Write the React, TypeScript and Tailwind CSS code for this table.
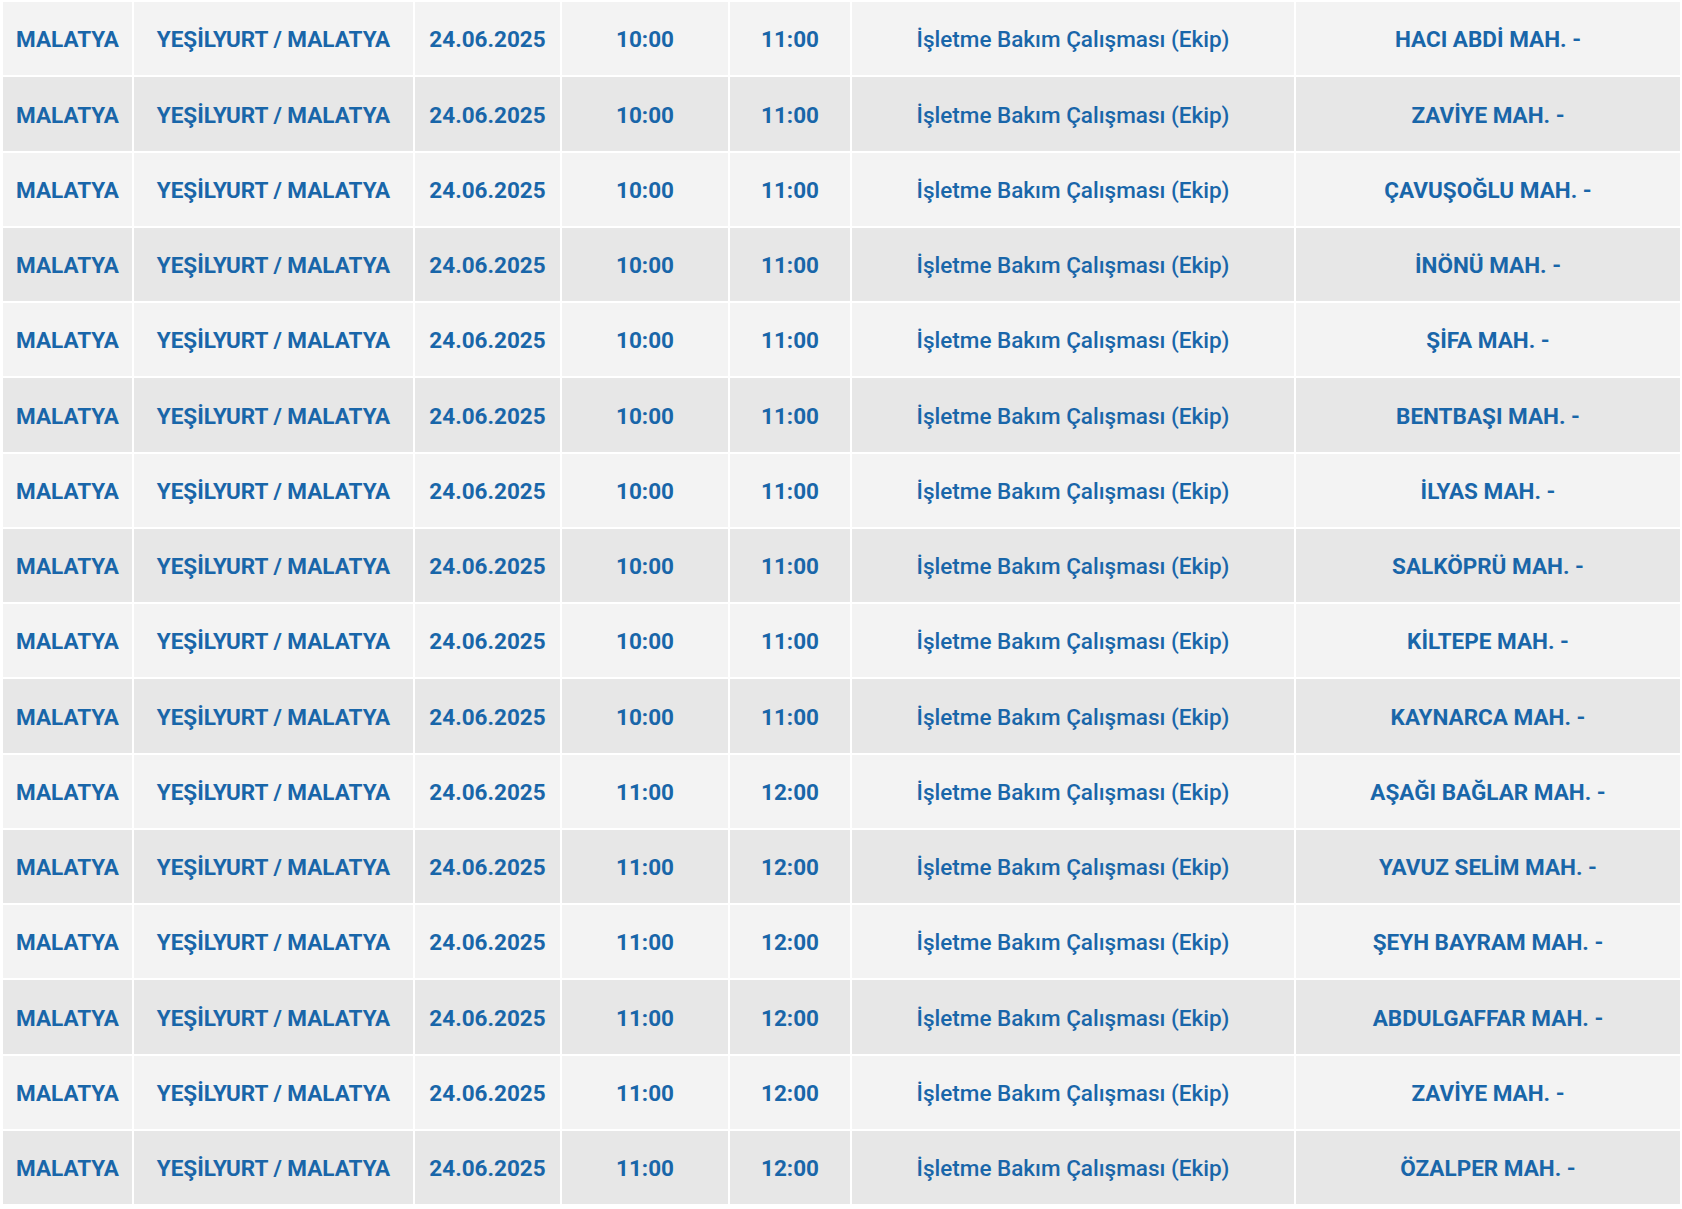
const rows: [string, string, string][] = [
  ["10:00", "11:00", "HACI ABDİ MAH. -"],
  ["10:00", "11:00", "ZAVİYE MAH. -"],
  ["10:00", "11:00", "ÇAVUŞOĞLU MAH. -"],
  ["10:00", "11:00", "İNÖNÜ MAH. -"],
  ["10:00", "11:00", "ŞİFA MAH. -"],
  ["10:00", "11:00", "BENTBAŞI MAH. -"],
  ["10:00", "11:00", "İLYAS MAH. -"],
  ["10:00", "11:00", "SALKÖPRÜ MAH. -"],
  ["10:00", "11:00", "KİLTEPE MAH. -"],
  ["10:00", "11:00", "KAYNARCA MAH. -"],
  ["11:00", "12:00", "AŞAĞI BAĞLAR MAH. -"],
  ["11:00", "12:00", "YAVUZ SELİM MAH. -"],
  ["11:00", "12:00", "ŞEYH BAYRAM MAH. -"],
  ["11:00", "12:00", "ABDULGAFFAR MAH. -"],
  ["11:00", "12:00", "ZAVİYE MAH. -"],
  ["11:00", "12:00", "ÖZALPER MAH. -"],
];

export default function App() {
  return (
    <div
      className="min-h-screen bg-white pt-[2px] pl-[3px] text-[22.5px] text-[#1966a9]"
      style={{ fontFamily: "Roboto, 'Liberation Sans', sans-serif" }}
    >
      <div className="grid w-[1677px] grid-cols-[129px_279px_145px_166px_120px_442px_384px] gap-x-[2px] gap-y-[2px]">
        {rows.map(([start, end, place], i) => {
          const bg = i % 2 === 0 ? "bg-[#f3f3f3]" : "bg-[#e7e7e7]";
          const cell = `flex h-[73.25px] items-center justify-center whitespace-nowrap pt-[3px] font-bold ${bg}`;
          return [
            <div key={`${i}-a`} className={cell}>MALATYA</div>,
            <div key={`${i}-b`} className={cell}>YEŞİLYURT / MALATYA</div>,
            <div key={`${i}-c`} className={cell}>24.06.2025</div>,
            <div key={`${i}-d`} className={cell}>{start}</div>,
            <div key={`${i}-e`} className={cell}>{end}</div>,
            <div key={`${i}-f`} className={`flex h-[73.25px] items-center justify-center whitespace-nowrap pt-[3px] font-medium ${bg}`}>
              İşletme Bakım Çalışması (Ekip)
            </div>,
            <div key={`${i}-g`} className={cell}>{place}</div>,
          ];
        })}
      </div>
    </div>
  );
}
